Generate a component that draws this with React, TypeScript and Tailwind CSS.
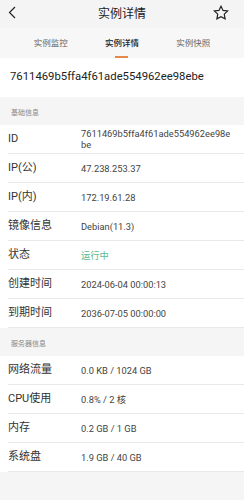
import React from 'react'

const font = { fontFamily: 'Roboto, "Noto Sans CJK SC", sans-serif' }

const basic: { label: string; value: string; green?: boolean }[] = [
  { label: 'ID', value: '7611469b5ffa4f61ade554962ee98ebe' },
  { label: 'IP(公)', value: '47.238.253.37' },
  { label: 'IP(内)', value: '172.19.61.28' },
  { label: '镜像信息', value: 'Debian(11.3)' },
  { label: '状态', value: '运行中', green: true },
  { label: '创建时间', value: '2024-06-04 00:00:13' },
  { label: '到期时间', value: '2036-07-05 00:00:00' },
]

const server = [
  { label: '网络流量', value: '0.0 KB / 1024 GB' },
  { label: 'CPU使用', value: '0.8% / 2 核' },
  { label: '内存', value: '0.2 GB / 1 GB' },
  { label: '系统盘', value: '1.9 GB / 40 GB' },
]

function Row({ label, value, green }: { label: string; value: string; green?: boolean }) {
  return (
    <div className="ml-2 flex h-[29px] items-center border-b border-[#e9e9e9]">
      <div className="w-[73px] shrink-0 text-[11px] text-[#333]">{label}</div>
      <div
        className={`w-[151px] break-all text-[9.3px] leading-[11px] ${green ? 'text-[#5cb98e]' : 'text-[#444]'}`}
      >
        {value}
      </div>
    </div>
  )
}

function Section({ title }: { title: string }) {
  return (
    <div className="flex h-[28px] items-center bg-[#f5f5f5] pl-[11px] pt-[4px] text-[7px] text-[#888]">
      {title}
    </div>
  )
}

export default function App() {
  const tabs = ['实例监控', '实例详情', '实例快照']
  return (
    <div className="min-h-[500px] w-[244px] bg-[#f5f5f5]" style={font}>
      {/* Header */}
      <div className="relative flex h-[28px] items-center justify-center bg-[#f4f4f4]">
        <svg className="absolute left-[8px] top-[6px]" width="8" height="13" viewBox="0 0 8 13" fill="none">
          <path d="M7 1L1.5 6.5L7 12" stroke="#222" strokeWidth="1.2" />
        </svg>
        <span className="text-[12px] text-[#222]">实例详情</span>
        <svg className="absolute left-[213px] top-[5px]" width="16" height="15" viewBox="0 0 24 23" fill="none">
          <path
            d="M12 1.8l3.1 6.5 7.1.9-5.2 4.9 1.3 7.1L12 17.8l-6.3 3.4 1.3-7.1-5.2-4.9 7.1-.9z"
            stroke="#222"
            strokeWidth="1.8"
            strokeLinejoin="miter"
          />
        </svg>
      </div>

      {/* Tabs */}
      <div className="grid h-[30px] grid-cols-3 bg-[#f7f7f7] px-[15px]">
        {tabs.map((t, i) => (
          <div key={t} className="flex flex-col items-center justify-end">
            <span
              className={`text-[8.5px] ${i === 1 ? 'font-medium text-[#222]' : 'text-[#666]'}`}
            >
              {t}
            </span>
            <div className={`mt-[6px] h-[2px] w-[13px] ${i === 1 ? 'bg-[#e4894a]' : 'bg-transparent'}`} />
          </div>
        ))}
      </div>

      {/* Instance id */}
      <div className="flex h-[39px] items-center bg-white pl-[10px] text-[11.3px] text-[#222]">
        7611469b5ffa4f61ade554962ee98ebe
      </div>

      <Section title="基础信息" />
      <div className="bg-white">
        {basic.map((r) => (
          <Row key={r.label} {...r} />
        ))}
      </div>

      <Section title="服务器信息" />
      <div className="bg-white">
        {server.map((r) => (
          <Row key={r.label} {...r} />
        ))}
      </div>
    </div>
  )
}
